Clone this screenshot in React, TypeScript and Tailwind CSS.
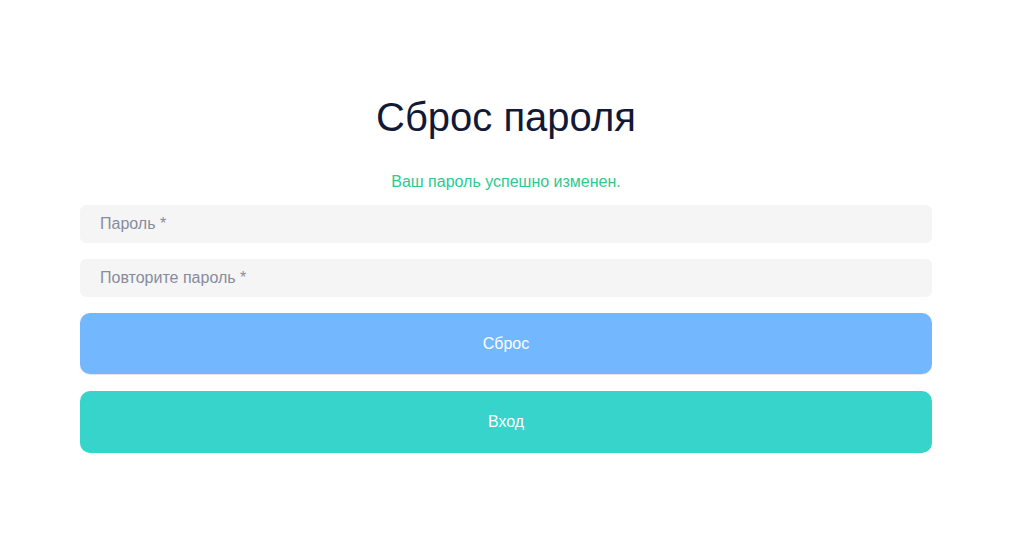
export default function App() {
  return (
    <div
      className="min-h-[543px] w-full bg-white"
      style={{ fontFamily: '"Liberation Sans", Arial, sans-serif' }}
    >
      <div className="ml-[80px] flex w-[852px] flex-col pt-[94px]">
        <h1 className="text-center text-[40px] leading-[46px] text-[#111936]">Сброс пароля</h1>
        <p className="mt-[32px] text-center text-[16px] leading-[20px] text-[#2dc98f]">
          Ваш пароль успешно изменен.
        </p>
        <div className="mt-[13px] flex h-[38px] items-center rounded-[6px] bg-[#f5f5f5] px-[20px] text-[16px] text-[#868c9c]">
          Пароль *
        </div>
        <div className="mt-[16px] flex h-[38px] items-center rounded-[6px] bg-[#f5f5f5] px-[20px] text-[16px] text-[#868c9c]">
          Повторите пароль *
        </div>
        <button className="mt-[16px] flex h-[61px] items-center justify-center rounded-[10px] bg-[#73b7ff] text-[16px] text-white shadow-[0_1px_0_#e6e6e6]">
          Сброс
        </button>
        <button className="mt-[17px] flex h-[62px] items-center justify-center rounded-[10px] bg-[#37d4cb] text-[16px] text-white">
          Вход
        </button>
      </div>
    </div>
  );
}
